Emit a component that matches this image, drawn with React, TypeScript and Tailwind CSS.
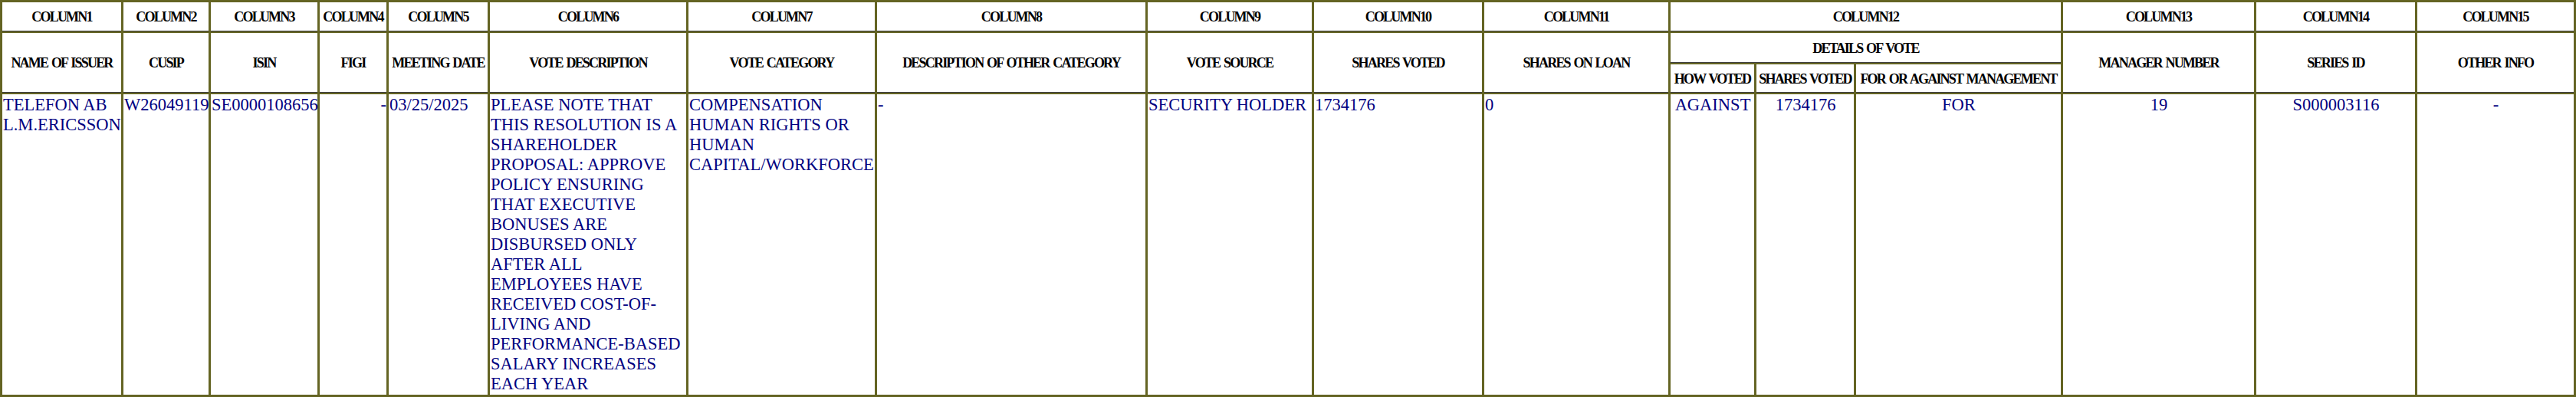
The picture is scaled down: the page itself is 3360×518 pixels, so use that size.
const th =
  "border-r-[3px] border-b-2 border-[#646423] shadow-[inset_0_-1px_0_#404040] px-0 text-center align-middle text-[18px] font-bold leading-[22px] tracking-[-1.8px] [word-spacing:2px] text-black whitespace-nowrap";
const td =
  "border-r-[3px] border-b-[3px] border-[#646423] pl-[1px] pr-0 pt-[1px] align-top text-[22.5px] leading-[26px] text-[#000080]";

const widths = [
  "w-[158px]",
  "w-[114px]",
  "w-[142px]",
  "w-[90px]",
  "w-[132px]",
  "w-[259px]",
  "w-[246px]",
  "w-[353px]",
  "w-[217px]",
  "w-[222px]",
  "w-[243px]",
  "w-[112px]",
  "w-[130px]",
  "w-[270px]",
  "w-[252px]",
  "w-[210px]",
  "w-[207px]",
];

const leftHeads = [
  "NAME OF ISSUER",
  "CUSIP",
  "ISIN",
  "FIGI",
  "MEETING DATE",
  "VOTE DESCRIPTION",
  "VOTE CATEGORY",
  "DESCRIPTION OF OTHER CATEGORY",
  "VOTE SOURCE",
  "SHARES VOTED",
  "SHARES ON LOAN",
];

const rightHeads = ["MANAGER NUMBER", "SERIES ID", "OTHER INFO"];

export default function App() {
  return (
    <div className="bg-white">
      <table className="w-full table-fixed border-separate border-spacing-0 border-l-[3px] border-t-[3px] border-[#646423] font-['Liberation_Serif',serif]">
        <colgroup>
          {widths.map((w, i) => (
            <col key={i} className={w} />
          ))}
        </colgroup>
        <thead>
          <tr>
            {Array.from({ length: 11 }, (_, i) => (
              <th key={i} className={`${th} h-[40px]`}>
                COLUMN{i + 1}
              </th>
            ))}
            <th colSpan={3} className={th}>
              COLUMN12
            </th>
            <th className={th}>COLUMN13</th>
            <th className={th}>COLUMN14</th>
            <th className={th}>COLUMN15</th>
          </tr>
          <tr>
            {leftHeads.map((h) => (
              <th key={h} rowSpan={2} className={th}>
                {h}
              </th>
            ))}
            <th colSpan={3} className={`${th} h-[41px]`}>
              DETAILS OF VOTE
            </th>
            {rightHeads.map((h) => (
              <th key={h} rowSpan={2} className={th}>
                {h}
              </th>
            ))}
          </tr>
          <tr>
            <th className={`${th} h-[39px]`}>HOW VOTED</th>
            <th className={th}>SHARES VOTED</th>
            <th className={th}>FOR OR AGAINST MANAGEMENT</th>
          </tr>
        </thead>
        <tbody>
          <tr>
            <td className={`${td} h-[395px]`}>TELEFON AB L.M.ERICSSON</td>
            <td className={td}>W26049119</td>
            <td className={td}>SE0000108656</td>
            <td className={`${td} text-right`}>-</td>
            <td className={td}>03/25/2025</td>
            <td className={td}>
              PLEASE NOTE THAT THIS RESOLUTION IS A SHAREHOLDER PROPOSAL: APPROVE POLICY ENSURING THAT
              EXECUTIVE BONUSES ARE DISBURSED ONLY AFTER ALL EMPLOYEES HAVE RECEIVED COST-OF-LIVING AND
              PERFORMANCE-BASED SALARY INCREASES EACH YEAR
            </td>
            <td className={td}>COMPENSATION HUMAN RIGHTS OR HUMAN CAPITAL/WORKFORCE</td>
            <td className={td}>-</td>
            <td className={td}>SECURITY HOLDER</td>
            <td className={td}>1734176</td>
            <td className={td}>0</td>
            <td className={`${td} text-center`}>AGAINST</td>
            <td className={`${td} text-center`}>1734176</td>
            <td className={`${td} text-center`}>FOR</td>
            <td className={`${td} text-center`}>19</td>
            <td className={`${td} text-center`}>S000003116</td>
            <td className={`${td} text-center`}>-</td>
          </tr>
        </tbody>
      </table>
    </div>
  );
}
